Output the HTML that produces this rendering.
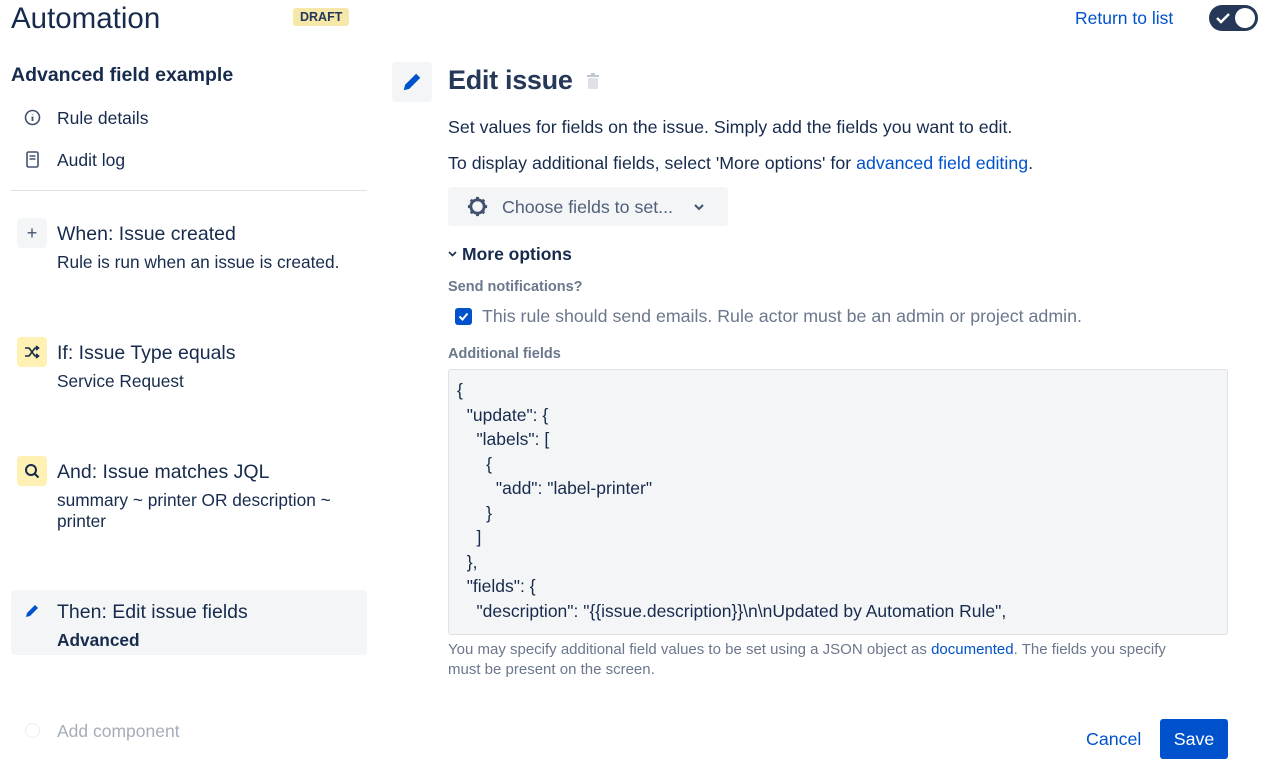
<!DOCTYPE html>
<html><head><meta charset="utf-8"><style>
*{box-sizing:border-box;margin:0;padding:0}
body{width:1263px;height:766px;background:#fff;font-family:"Liberation Sans",sans-serif;color:#172b4d;position:relative;overflow:hidden}
.a{position:absolute;white-space:nowrap}
.ic{position:absolute;width:30px;height:30px;border-radius:4px;display:flex;align-items:center;justify-content:center}
</style></head><body>
<div class="a" style="left:11px;top:2px;font-size:29.5px;color:#172b4d">Automation</div>
<div class="a" style="left:293px;top:8px;background:#f5e8a8;color:#253858;font-size:12.5px;font-weight:bold;padding:2px 7px;border-radius:3px">DRAFT</div>
<div class="a" style="left:1075px;top:8px;font-size:17.5px;color:#0052cc">Return to list</div>
<div class="a" style="left:1209px;top:5px;width:49px;height:26px;border-radius:13px;background:#253858">
 <svg class="a" style="left:6px;top:6px" width="16" height="14" viewBox="0 0 16 14"><path d="M2 7l4 4 8-8" stroke="#fff" stroke-width="2.4" fill="none"/></svg>
 <div class="a" style="left:26px;top:3px;width:20px;height:20px;border-radius:50%;background:#fff"></div>
</div>

<div class="a" style="left:11px;top:64px;font-size:19.5px;font-weight:bold">Advanced field example</div>
<svg class="a" style="left:24px;top:109px" width="17" height="17" viewBox="0 0 17 17"><circle cx="8.5" cy="8.5" r="7" stroke="#42526e" stroke-width="1.6" fill="none"/><path d="M8.5 7.5v4.5M8.5 5v0.5" stroke="#42526e" stroke-width="1.8"/></svg>
<div class="a" style="left:57px;top:108px;font-size:17.5px">Rule details</div>
<svg class="a" style="left:26px;top:151px" width="13" height="17" viewBox="0 0 13 17"><rect x="1" y="1" width="11" height="15" rx="1.5" stroke="#42526e" stroke-width="1.6" fill="none"/><path d="M3.5 5h6M3.5 8h6" stroke="#42526e" stroke-width="1.4"/></svg>
<div class="a" style="left:57px;top:150px;font-size:17.5px">Audit log</div>
<div class="a" style="left:11px;top:190px;width:356px;border-top:1px solid #dfe1e6"></div>

<div class="ic" style="left:17px;top:218px;background:#f4f5f7;font-size:18px;color:#42526e">+</div>
<div class="a" style="left:57px;top:223px;font-size:19.5px">When: Issue created</div>
<div class="a" style="left:57px;top:252px;font-size:17.3px">Rule is run when an issue is created.</div>

<div class="ic" style="left:17px;top:337px;background:#fff0b3"><svg width="16" height="14" viewBox="0 0 16 14"><path d="M1 3h4l6 8h4M1 11h4l6-8h4M12 1l2.5 2-2.5 2M12 9l2.5 2-2.5 2" stroke="#172b4d" stroke-width="1.6" fill="none"/></svg></div>
<div class="a" style="left:57px;top:342px;font-size:19.5px">If: Issue Type equals</div>
<div class="a" style="left:57px;top:371px;font-size:17.3px">Service Request</div>

<div class="ic" style="left:17px;top:456px;background:#fff0b3"><svg width="16" height="16" viewBox="0 0 16 16"><circle cx="7" cy="7" r="5" stroke="#172b4d" stroke-width="2" fill="none"/><path d="M10.5 10.5l4 4" stroke="#172b4d" stroke-width="2"/></svg></div>
<div class="a" style="left:57px;top:461px;font-size:19.5px">And: Issue matches JQL</div>
<div class="a" style="left:57px;top:490px;font-size:17.3px;line-height:21px">summary ~ printer OR description ~<br>printer</div>

<div class="a" style="left:11px;top:590px;width:356px;height:65px;background:#f4f5f7;border-radius:4px"></div>
<svg class="a" style="left:24px;top:603px" width="16" height="16" viewBox="0 0 16 16"><path d="M2 14l1-4 8-8 3 3-8 8z" fill="#0052cc"/></svg>
<div class="a" style="left:57px;top:601px;font-size:19.5px">Then: Edit issue fields</div>
<div class="a" style="left:57px;top:630px;font-size:17.3px;font-weight:bold">Advanced</div>

<div class="a" style="left:25px;top:723px;width:15px;height:15px;border:1.5px solid #ebecf0;border-radius:50%"></div>
<div class="a" style="left:57px;top:721px;font-size:17.5px;color:#a5adba">Add component</div>

<div class="ic" style="left:392px;top:62px;width:40px;height:40px;background:#f4f5f7"><svg width="22" height="22" viewBox="0 0 16 16"><path d="M2 14l1-4 8-8 3 3-8 8z" fill="#0052cc"/></svg></div>
<div class="a" style="left:448px;top:65px;font-size:27px;font-weight:bold;color:#253858;letter-spacing:-0.3px">Edit issue</div>
<svg class="a" style="left:586px;top:73px" width="14" height="17" viewBox="0 0 14 17"><rect x="1" y="2" width="12" height="2" fill="#c1c7d0"/><rect x="5" y="0" width="4" height="2" fill="#c1c7d0"/><rect x="2" y="5" width="10" height="11" rx="1" fill="#dfe1e6"/></svg>
<div class="a" style="left:448px;top:117px;font-size:17.8px">Set values for fields on the issue. Simply add the fields you want to edit.</div>
<div class="a" style="left:448px;top:153px;font-size:17.8px">To display additional fields, select 'More options' for <span style="color:#0052cc">advanced field editing</span>.</div>
<div class="a" style="left:448px;top:187px;width:280px;height:39px;background:#f4f5f7;border-radius:3px"></div>
<svg class="a" style="left:466px;top:195px" width="23" height="23" viewBox="0 0 24 24"><circle cx="12" cy="12" r="7" stroke="#42526e" stroke-width="3" fill="none"/><g stroke="#42526e" stroke-width="3"><path d="M12 2v3M12 19v3M2 12h3M19 12h3M5 5l2 2M17 17l2 2M5 19l2-2M17 7l2-2"/></g></svg>
<div class="a" style="left:502px;top:197px;font-size:17.8px;color:#505f79">Choose fields to set...</div>
<svg class="a" style="left:693px;top:202px" width="12" height="10" viewBox="0 0 12 10"><path d="M2 3l4 4 4-4" stroke="#42526e" stroke-width="2" fill="none"/></svg>
<svg class="a" style="left:448px;top:250px" width="9" height="8" viewBox="0 0 9 8"><path d="M1 2l3.5 3.5L8 2" stroke="#172b4d" stroke-width="1.6" fill="none"/></svg>
<div class="a" style="left:462px;top:244px;font-size:17.5px;font-weight:bold">More options</div>
<div class="a" style="left:448px;top:279px;font-size:14.5px;font-weight:bold;color:#6b778c">Send notifications?</div>
<div class="a" style="left:455px;top:308px;width:17px;height:17px;border-radius:3px;background:#0052cc"><svg width="17" height="17" viewBox="0 0 17 17"><path d="M4.5 8.5l3 3 5-6" stroke="#fff" stroke-width="2" fill="none"/></svg></div>
<div class="a" style="left:482px;top:306px;font-size:17.8px;color:#6b778c">This rule should send emails. Rule actor must be an admin or project admin.</div>
<div class="a" style="left:448px;top:346px;font-size:14.5px;font-weight:bold;color:#6b778c">Additional fields</div>
<div class="a" style="left:448px;top:369px;width:780px;height:266px;background:#f4f5f7;border:1px solid #dfe1e6;border-radius:3px;overflow:hidden">
<pre style="font-family:'Liberation Sans',sans-serif;font-size:17.5px;line-height:24.5px;padding:8px 0 0 8px;color:#172b4d">{
  "update": {
    "labels": [
      {
        "add": "label-printer"
      }
    ]
  },
  "fields": {
    "description": "{{issue.description}}\n\nUpdated by Automation Rule",</pre></div>
<div class="a" style="left:448px;top:640px;font-size:15px;line-height:20px;color:#6b778c">You may specify additional field values to be set using a JSON object as <span style="color:#0052cc">documented</span>. The fields you specify<br>must be present on the screen.</div>
<div class="a" style="left:1086px;top:729px;font-size:17.8px;color:#0052cc">Cancel</div>
<div class="a" style="left:1160px;top:719px;width:68px;height:40px;background:#0052cc;border-radius:3px;color:#fff;font-size:17.8px;display:flex;align-items:center;justify-content:center">Save</div>
</body></html>
